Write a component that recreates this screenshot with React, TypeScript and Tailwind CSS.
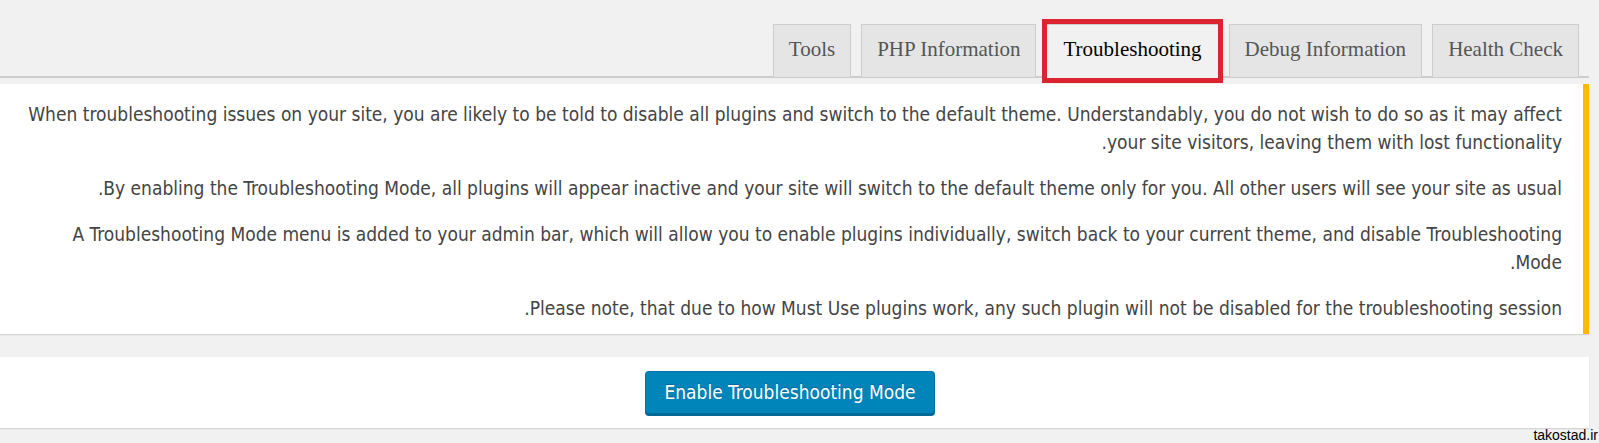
const tabs = [
  { label: "Tools", active: false },
  { label: "PHP Information", active: false },
  { label: "Troubleshooting", active: true },
  { label: "Debug Information", active: false },
  { label: "Health Check", active: false },
];

const paragraphs = [
  "When troubleshooting issues on your site, you are likely to be told to disable all plugins and switch to the default theme. Understandably, you do not wish to do so as it may affect your site visitors, leaving them with lost functionality.",
  "By enabling the Troubleshooting Mode, all plugins will appear inactive and your site will switch to the default theme only for you. All other users will see your site as usual.",
  "A Troubleshooting Mode menu is added to your admin bar, which will allow you to enable plugins individually, switch back to your current theme, and disable Troubleshooting Mode.",
  "Please note, that due to how Must Use plugins work, any such plugin will not be disabled for the troubleshooting session.",
];

function Tab({ label, active }: { label: string; active: boolean }) {
  return (
    <div className="relative -mb-[2px]">
      <div
        className={
          active
            ? "flex h-[54px] items-center border border-b-[#f1f1f1] border-[#ccc] bg-[#f1f1f1] px-[16px] pb-[2px] text-[21px] text-black"
            : "flex h-[54px] items-center border border-[#ccc] bg-[#e5e5e5] px-[15px] pb-[2px] text-[21px] text-[#555]"
        }
      >
        {label}
      </div>
      {active && (
        <div className="pointer-events-none absolute -bottom-[5px] -left-[4px] -right-[4px] -top-[5px] border-[5px] border-[#dc2430]" />
      )}
    </div>
  );
}

export default function App() {
  return (
    <div className="relative min-h-[443px] overflow-hidden bg-[#f1f1f1] font-['Liberation_Serif',serif]">
      {/* tab strip */}
      <div className="mr-[10px] flex justify-end gap-[10px] border-b-2 border-[#ccc] pt-[24px] pr-[10px]">
        {tabs.map((t) => (
          <Tab key={t.label} label={t.label} active={t.active} />
        ))}
      </div>

      <div className="mr-[10px] font-['DejaVu_Sans',sans-serif] font-stretch-condensed">
        {/* notice */}
        <div
          dir="rtl"
          className="mt-[6px] border-r-[6px] border-[#ffb900] bg-white pt-[16px] pr-[21px] pb-[12px] pl-[20px] text-[19px] leading-[28px] text-[#444] shadow-[0_1px_1px_rgba(0,0,0,0.12)]"
        >
          {paragraphs.map((p, i) => (
            <p key={i} className={i > 0 ? "mt-[18px]" : ""}>
              {p}
            </p>
          ))}
        </div>

        {/* action card */}
        <div className="mt-[23px] flex h-[71px] items-center justify-center bg-white pr-[9px] shadow-[0_1px_1px_rgba(0,0,0,0.12)]">
          <button className="h-[43px] rounded-[4px] border border-[#0073aa] border-b-[#006799] bg-[#0085ba] px-[18px] text-[19px] text-white shadow-[0_2px_0_#006799] [text-shadow:0_-1px_1px_#006799]">
            Enable Troubleshooting Mode
          </button>
        </div>
      </div>

      <div className="absolute right-[1px] top-[427px] font-['Liberation_Sans',sans-serif] text-[14px] leading-[17px] text-black">
        takostad.ir
      </div>
    </div>
  );
}
